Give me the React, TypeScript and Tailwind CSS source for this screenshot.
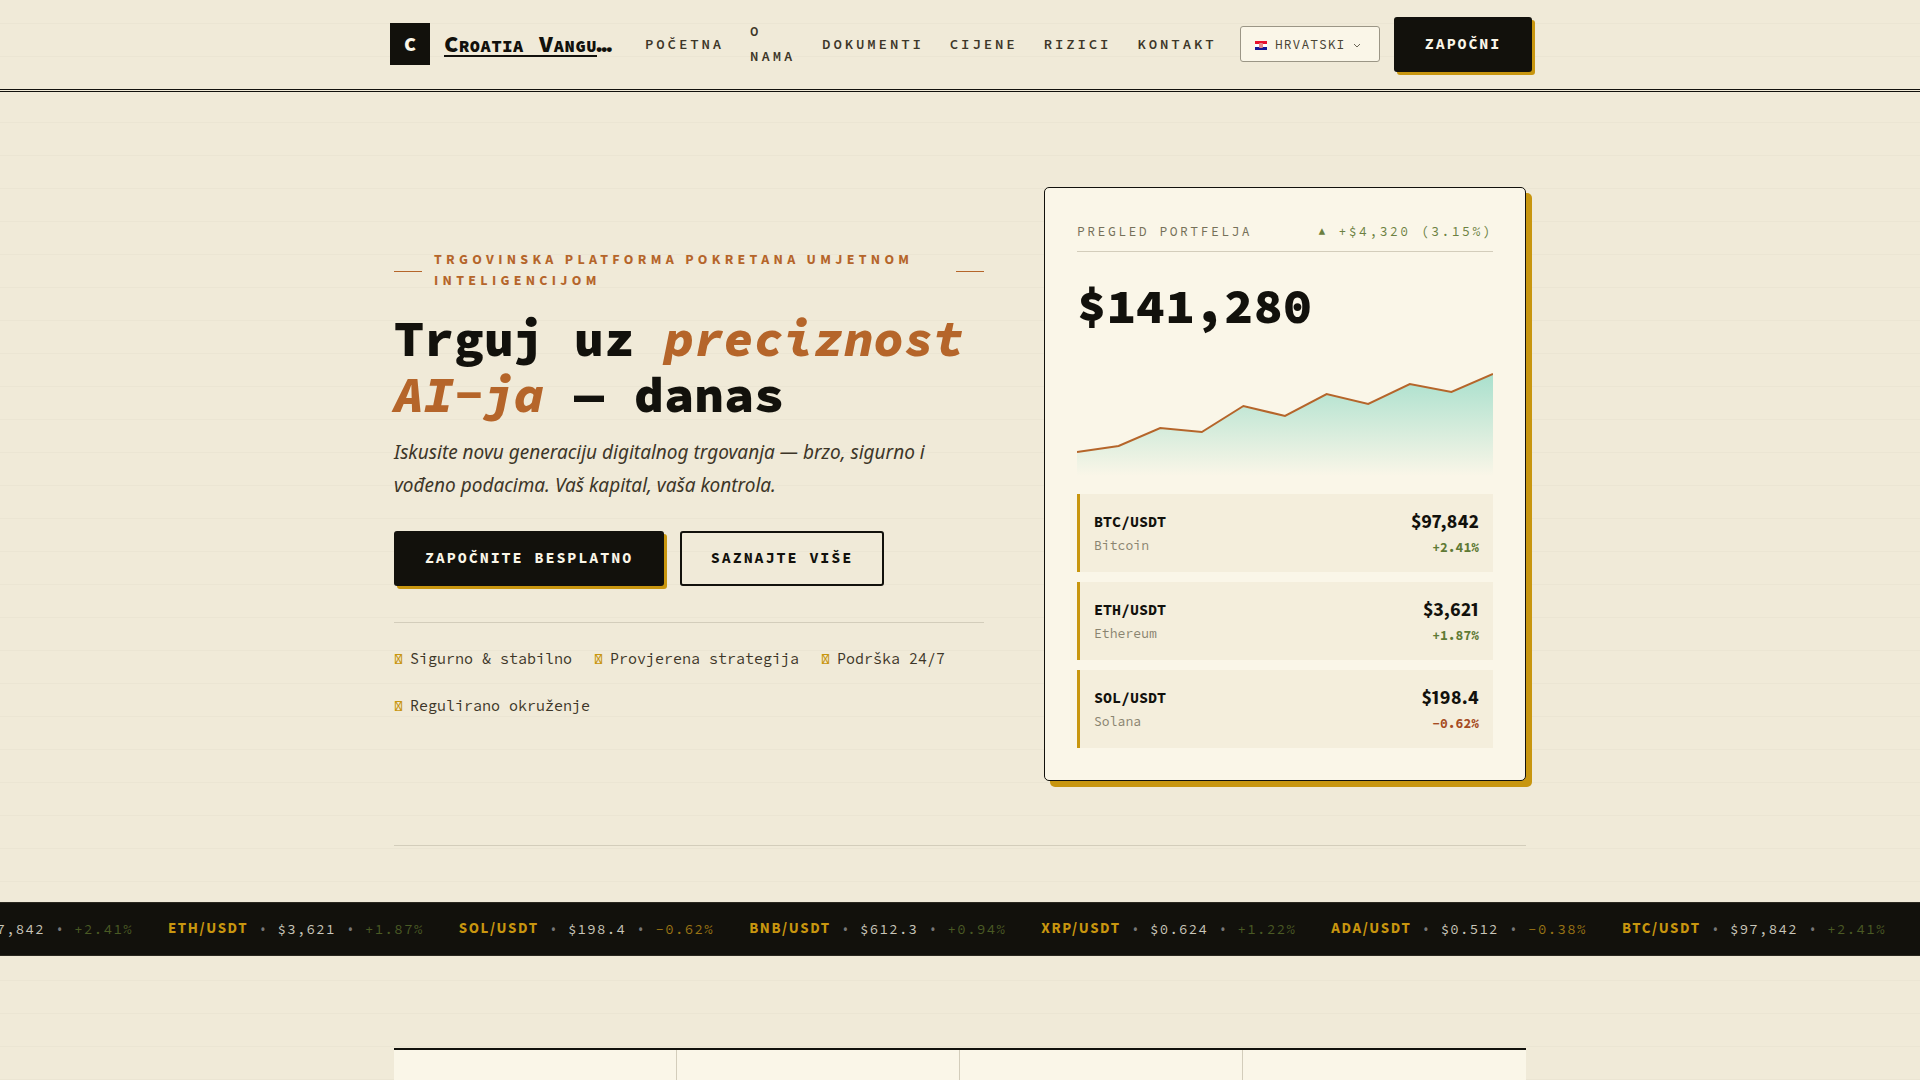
const MONO = "font-['Source_Code_Pro',monospace]";

function Flag() {
  return (
    <svg width="12" height="9" viewBox="0 0 12 9" className="shrink-0">
      <rect width="12" height="3" fill="#e8112d" />
      <rect y="3" width="12" height="3" fill="#ffffff" />
      <rect y="6" width="12" height="3" fill="#171796" />
      <rect x="4" y="2" width="4" height="5" rx="1" fill="#e58a8a" />
    </svg>
  );
}

const rows = [
  { s: "BTC/USDT", n: "Bitcoin", p: "$97,842", c: "+2.41%", up: true },
  { s: "ETH/USDT", n: "Ethereum", p: "$3,621", c: "+1.87%", up: true },
  { s: "SOL/USDT", n: "Solana", p: "$198.4", c: "−0.62%", up: false },
];

const ticker = [
  ["BTC/USDT", "$97,842", "+2.41%", true],
  ["ETH/USDT", "$3,621", "+1.87%", true],
  ["SOL/USDT", "$198.4", "-0.62%", false],
  ["BNB/USDT", "$612.3", "+0.94%", true],
  ["XRP/USDT", "$0.624", "+1.22%", true],
  ["ADA/USDT", "$0.512", "-0.38%", false],
  ["BTC/USDT", "$97,842", "+2.41%", true],
] as const;

export default function App() {
  return (
    <div className="relative h-[1080px] overflow-hidden bg-[#f0ead8] bg-[repeating-linear-gradient(0deg,#ebe5d3_0px,#ebe5d3_1px,transparent_1px,transparent_33px)] text-[#12110c]">
      <header className="flex h-[92px] items-center border-b-[3px] border-double border-[#12110c] pb-[1px] pl-[390px] pr-[388px]">
        <div className="flex w-[226px] shrink-0 items-center gap-[14px]">
          <div className={`flex h-[42px] w-[40px] shrink-0 items-center justify-center bg-[#12110c] text-[20px] font-black text-[#faf6e8] ${MONO}`}>C</div>
          <div className={`w-[172px] truncate text-[24px] font-black tracking-[0.6px] [font-variant:small-caps] ${MONO}`}>
            <span className="underline decoration-[2px] underline-offset-[3px]">Croatia Vanguard</span>
          </div>
        </div>
        <nav className={`ml-[29px] flex flex-1 items-center gap-[26px] text-[14px] font-semibold leading-[25px] tracking-[2.9px] text-[#3d3628] ${MONO}`}>
          <span>POČETNA</span>
          <span className="w-[46px]">O NAMA</span>
          <span>DOKUMENTI</span>
          <span>CIJENE</span>
          <span>RIZICI</span>
          <span>KONTAKT</span>
        </nav>
        <div className={`flex h-[36px] w-[140px] shrink-0 items-center gap-[8px] rounded-[3px] border border-[#9b9686] bg-[#faf6e8] pl-[14px] pt-[2px] text-[13px] tracking-[1px] text-[#4a4536] ${MONO}`}>
          <Flag />
          <span>HRVATSKI</span>
          <svg width="8" height="5" viewBox="0 0 8 5" className="shrink-0"><path d="M1 1 L4 4 L7 1" fill="none" stroke="#6b6656" /></svg>
        </div>
        <button className={`ml-[14px] h-[55px] w-[138px] shrink-0 rounded-[3px] bg-[#12110c] text-[15px] font-bold tracking-[1.9px] text-[#faf6e8] shadow-[3px_3px_0_#c8960f] ${MONO}`}>ZAPOČNI</button>
      </header>

      <main className="mx-auto w-[1132px]">
        <section className="grid grid-cols-[590px_482px] gap-[60px] pt-[95px]">
          <div className="pt-[63px]">
            <div className="flex items-center gap-[12px]">
              <span className="h-px w-[28px] shrink-0 bg-[#b5652a]" />
              <span className="flex-1 font-['Source_Sans_3',sans-serif] text-[14px] font-bold leading-[21px] tracking-[4.33px] text-[#b5652a]">TRGOVINSKA PLATFORMA POKRETANA UMJETNOM INTELIGENCIJOM</span>
              <span className="h-px w-[28px] shrink-0 bg-[#b5652a]" />
            </div>
            <h1 className={`mt-[19px] text-[50px] font-black leading-[56px] ${MONO}`}>
              Trguj uz <em className="text-[#b5652a]">preciznost AI-ja</em> — danas
            </h1>
            <p className="mt-[13px] font-['Noto_Sans',sans-serif] text-[19px] italic leading-[33px] text-[#3d3628]">Iskusite novu generaciju digitalnog trgovanja — brzo, sigurno i vođeno podacima. Vaš kapital, vaša kontrola.</p>
            <div className="mt-[29px] flex gap-[16px]">
              <button className={`h-[55px] w-[270px] rounded-[3px] bg-[#12110c] text-[15px] font-bold tracking-[1.96px] text-[#faf6e8] shadow-[3px_3px_0_#c8960f] ${MONO}`}>ZAPOČNITE BESPLATNO</button>
              <button className={`h-[55px] w-[204px] rounded-[3px] border-2 border-[#12110c] text-[15px] font-bold tracking-[1.96px] ${MONO}`}>SAZNAJTE VIŠE</button>
            </div>
            <div className="mt-[36px] border-t border-[#d3cdbb] pt-[12px]">
              <div className={`flex flex-wrap gap-x-[22px] text-[15px] leading-[47px] text-[#3d3628] ${MONO}`}>
                {["Sigurno & stabilno", "Provjerena strategija", "Podrška 24/7", "Regulirano okruženje"].map((t) => (
                  <span key={t} className="flex items-center gap-[7px]"><span className="text-[#c8960f]">{"\uE000"}</span>{t}</span>
                ))}
              </div>
            </div>
          </div>

          <div className="rounded-[5px] border border-[#12110c] bg-[#faf6e8] px-[32px] pb-[32px] pt-[34px] shadow-[6px_6px_0_#c8960f]">
            <div className={`flex justify-between border-b border-[#d3cdbb] pb-[9px] text-[13px] tracking-[2.5px] ${MONO}`}>
              <span className="text-[#757059]">PREGLED PORTFELJA</span>
              <span className="text-[#6b8040]">▲ +$4,320 (3.15%)</span>
            </div>
            <div className={`mt-[21px] text-[49px] font-black leading-[66px] ${MONO}`}>$141,280</div>
            <svg width="416" height="110" viewBox="0 0 416 110" className="mt-[27px] block">
              <defs>
                <linearGradient id="g" x1="0" y1="0" x2="0" y2="1">
                  <stop offset="0" stopColor="#a9e0cd" />
                  <stop offset="1" stopColor="#a9e0cd" stopOpacity="0" />
                </linearGradient>
              </defs>
              <path d="M0 86 L41.6 80 L83.2 62 L124.8 66 L166.4 40 L208 50 L249.6 28 L291.2 38 L332.8 18 L374.4 26 L416 8 L416 110 L0 110 Z" fill="url(#g)" />
              <path d="M0 86 L41.6 80 L83.2 62 L124.8 66 L166.4 40 L208 50 L249.6 28 L291.2 38 L332.8 18 L374.4 26 L416 8" fill="none" stroke="#b5652a" strokeWidth="2" />
            </svg>
            <div className="mt-[18px] flex flex-col gap-[10px]">
              {rows.map((r) => (
                <div key={r.s} className="flex h-[78px] items-center justify-between border-l-[3px] border-[#c8960f] bg-[#f4eedc] pl-[14px] pr-[14px] pt-[2px]">
                  <div>
                    <div className={`text-[15px] font-bold leading-[22px] ${MONO}`}>{r.s}</div>
                    <div className={`mt-[3px] text-[13px] leading-[20px] tracking-[0.06px] text-[#8a8470] ${MONO}`}>{r.n}</div>
                  </div>
                  <div className="text-right">
                    <div className="font-['Source_Sans_3',sans-serif] text-[20px] font-bold leading-[24px] proportional-nums">{r.p}</div>
                    <div className={`mt-[4px] text-[13px] font-bold leading-[20px] ${r.up ? "text-[#5f7a35]" : "text-[#a64b22]"} ${MONO}`}>{r.c}</div>
                  </div>
                </div>
              ))}
            </div>
          </div>
        </section>
        <div className="mt-[64px] h-px bg-[#d3cdbb]" />
      </main>

      <div className="mt-[56px] flex h-[54px] items-center overflow-hidden border-y border-[#2a2820] bg-[#12110c] pt-[2px]">
        <div className="ml-[-131px] flex shrink-0 gap-[35px] whitespace-nowrap">
          {ticker.map(([s, p, c, up], i) => (
            <div key={i} className="flex items-center gap-[12px] text-[14px]">
              <span className="font-['Source_Sans_3',sans-serif] text-[15px] font-bold tracking-[1.6px] text-[#c8960f]">{s}</span>
              <span className="text-[#777]">•</span>
              <span className={`tracking-[1.3px] text-[#c9c6ba] ${MONO}`}>{p}</span>
              <span className="text-[#777]">•</span>
              <span className={`tracking-[1.4px] ${up ? "text-[#4a5a24]" : "text-[#9a7414]"} ${MONO}`}>{c}</span>
            </div>
          ))}
        </div>
      </div>

      <section className="mx-auto mt-[92px] grid w-[1132px] grid-cols-4 border-t-[2px] border-[#12110c] bg-[#faf6e8]">
        {[0, 1, 2, 3].map((i) => (
          <div key={i} className={`h-[140px] ${i < 3 ? "border-r border-[#d3cdbb]" : ""}`} />
        ))}
      </section>
    </div>
  );
}
